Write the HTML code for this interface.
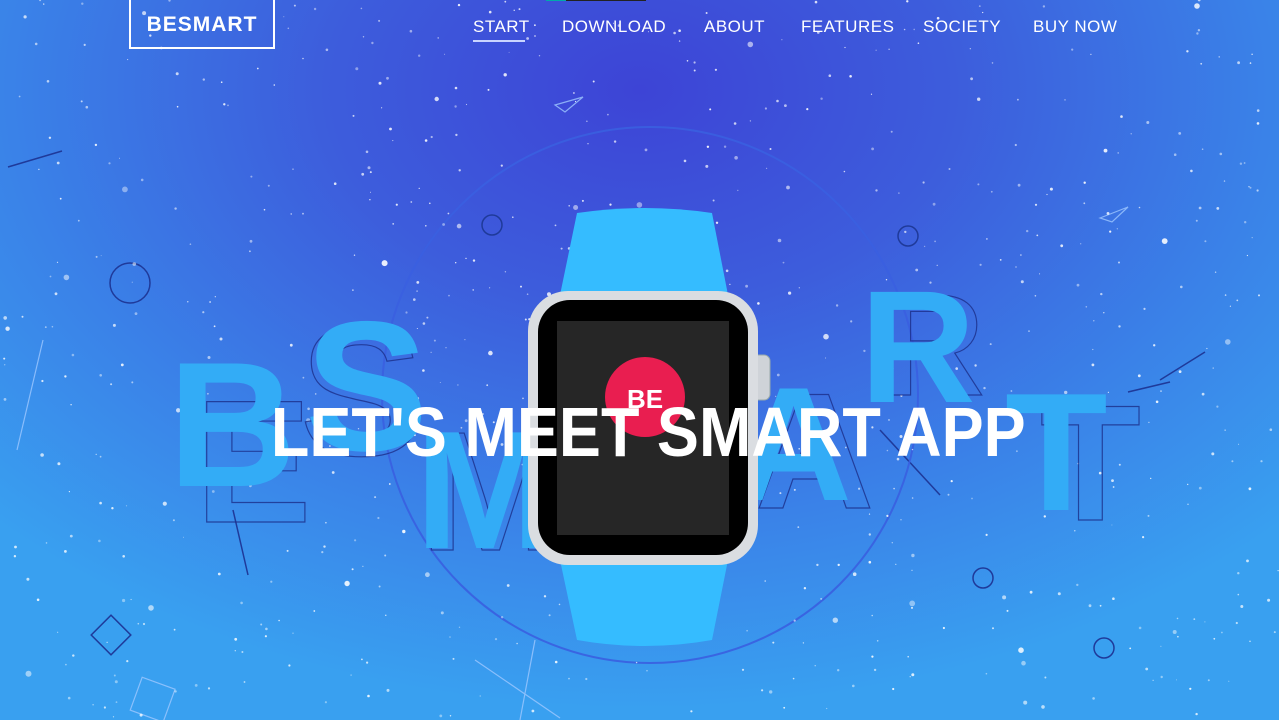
<!DOCTYPE html>
<html><head><meta charset="utf-8"><style>
html,body{margin:0;padding:0;width:1279px;height:720px;overflow:hidden}
body{position:relative;font-family:"Liberation Sans",sans-serif;
background:radial-gradient(ellipse 900px 620px at 640px 90px,#3d44d6 0%,#3d5ddc 35%,#3a82e8 70%,#39a0f0 100%);}
svg{position:absolute;left:0;top:0}
.logo{position:absolute;left:129px;top:0;width:142px;height:47px;border:2px solid #fff;border-top:none;color:#fff;font-weight:bold;font-size:21px;letter-spacing:1px;text-align:center;line-height:49px}
.nav{position:absolute;top:17px;color:#fff;font-size:17px;letter-spacing:0.5px}
.title{position:absolute;left:0;width:1279px;top:392px;text-align:center;color:#fff;font-weight:bold;font-size:70px;line-height:80px;white-space:nowrap}
.title span{display:inline-block;transform:scaleX(0.9);margin-left:17px}
</style></head><body>
<svg id="bg" width="1279" height="720">
<g fill="none" stroke="#1f3a9a" stroke-width="1.5">
<circle cx="130" cy="283" r="20"/><circle cx="492" cy="225" r="10"/><circle cx="908" cy="236" r="10"/><circle cx="983" cy="578" r="10"/><circle cx="1104" cy="648" r="10"/>
<rect x="97" y="621" width="28" height="28" transform="rotate(45 111 635)"/>
<path d="M8 167 L62 151"/><path d="M1160 380 L1205 352"/><path d="M1128 392 L1170 382"/>
<path d="M233 510 L248 575"/><path d="M880 430 L940 495"/>
</g>
<g fill="none" stroke="#9fc8ff" stroke-width="1.2" opacity="0.8">
<path d="M43 340 L17 450"/><path d="M475 660 L560 718"/><path d="M535 640 L520 720"/>
<path d="M555 105 L583 97 L565 112 Z"/><path d="M1100 218 L1128 207 L1112 222 Z"/>
<rect x="135" y="682" width="35" height="35" transform="rotate(20 152 700)"/>
</g>
<circle cx="650" cy="395" r="268" fill="none" stroke="#3a5fe0" stroke-width="2" opacity="0.9"/>
<g id="stars" fill="#fff"></g>
<g font-family="Liberation Sans,sans-serif" font-weight="bold">
<g fill="none" stroke="#1c2f8a" stroke-width="1.2" opacity="0.8">
<text x="195" y="522" font-size="175">E</text>
<text x="300" y="455" font-size="185">S</text>
<text x="420" y="550" font-size="170">M</text>
<text x="755" y="508" font-size="165">A</text>
<text x="880" y="395" font-size="145">R</text>
<text x="1040" y="520" font-size="165">T</text>
</g>
<g fill="#33acf6">
<text x="168" y="486" font-size="178">B</text>
<text x="305" y="450" font-size="185">S</text>
<text x="415" y="548" font-size="168">M</text>
<text x="735" y="500" font-size="162">A</text>
<text x="860" y="402" font-size="160">R</text>
<text x="1005" y="510" font-size="168">T</text>
</g></g>
<path d="M577 213 Q645 203 712 213 L728 295 L560 295 Z" fill="#35bcff"/>
<path d="M560 560 L728 560 L712 640 Q645 652 577 640 Z" fill="#35bcff"/>
<rect x="751" y="355" width="19" height="45" rx="6" fill="#cfd3d8" stroke="#9aa" />
<rect x="528" y="291" width="230" height="274" rx="40" fill="#dadde1"/>
<rect x="538" y="300" width="210" height="255" rx="32" fill="#000"/>
<rect x="557" y="321" width="172" height="214" fill="#262626"/>
<circle cx="645" cy="397" r="40" fill="#e91e50"/>
<text x="645" y="408" font-family="Liberation Sans,sans-serif" font-weight="bold" font-size="26" fill="#fff" text-anchor="middle">BE</text>
</svg>
<div class="logo">BESMART</div>
<div class="nav" style="left:473px">START</div>
<div style="position:absolute;left:473px;top:40px;width:52px;height:2px;background:#c9d4ff"></div>
<div class="nav" style="left:562px">DOWNLOAD</div>
<div class="nav" style="left:704px">ABOUT</div>
<div class="nav" style="left:801px">FEATURES</div>
<div class="nav" style="left:923px">SOCIETY</div>
<div class="nav" style="left:1033px">BUY NOW</div>
<div style="position:absolute;left:546px;top:0;width:20px;height:1px;background:#0aa"></div>
<div style="position:absolute;left:566px;top:0;width:80px;height:1px;background:#222"></div>
<div class="title"><span>LET'S MEET SMART APP</span></div>
<script>
var g=document.getElementById('stars'),s=12345;function r(){s=(s*16807)%2147483647;return s/2147483647;}
var h='';for(var i=0;i<700;i++){var x=r()*1279,y=r()*720,rr=r()<0.9?0.5+r()*1:1.5+r()*1.5;h+='<circle cx="'+x.toFixed(1)+'" cy="'+y.toFixed(1)+'" r="'+rr.toFixed(1)+'" opacity="'+(0.4+r()*0.5).toFixed(2)+'"/>';}
g.innerHTML=h;
</script>
</body></html>
